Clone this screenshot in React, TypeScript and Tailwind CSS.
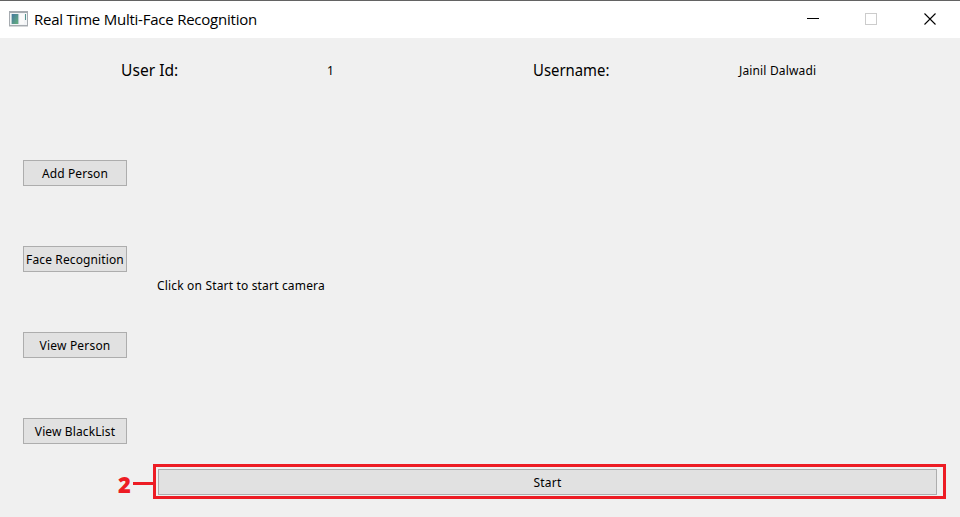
import type { ReactNode } from 'react';

const actions = [
  { label: 'Add Person', text: 'tracking-[0.1px]' },
  { label: 'Face Recognition', text: 'tracking-[0.12px]' },
  { label: 'View Person', text: 'tracking-[0.2px]' },
  { label: 'View BlackList', text: 'tracking-[0.12px]' },
];

function PushButton({ className, children }: { className: string; children: ReactNode }) {
  return (
    <button
      className={`flex h-[26px] items-center justify-center whitespace-nowrap border border-[#adadad] bg-[#e1e1e1] pt-px text-[12px] leading-4 ${className}`}
    >
      {children}
    </button>
  );
}

function TitleBar() {
  return (
    <header className="flex h-[38px] items-center border-t border-[#636363] bg-white pb-[2px] pl-[9px]">
      <svg width="19" height="16" viewBox="0 0 19 16" shapeRendering="crispEdges">
        <defs>
          <linearGradient id="pane" x1="0" y1="0" x2="1" y2="1">
            <stop offset="0" stopColor="#4478a0" />
            <stop offset="1" stopColor="#65b07c" />
          </linearGradient>
        </defs>
        <rect x="0" y="0" width="19" height="15" fill="#a6abb0" />
        <rect x="1" y="2" width="17" height="12" fill="#f2f4f6" />
        <rect x="2" y="3" width="8" height="10" fill="#b4ccd0" />
        <rect x="3" y="3" width="6" height="10" fill="url(#pane)" />
        <rect x="11" y="3" width="4" height="10" fill="#fafafa" />
        <rect x="16" y="3" width="1" height="6" fill="#559590" />
        <rect x="0" y="15" width="19" height="1" fill="#d5d7d9" />
      </svg>
      <h1 className="ml-[6px] whitespace-nowrap font-['Open_Sans',sans-serif] text-[15px] leading-5 tracking-[-0.23px]">
        Real Time Multi-Face Recognition
      </h1>
      <div className="ml-auto flex items-center">
        <svg width="153" height="14" viewBox="0 0 153 14" fill="none">
          <path d="M0 6.5h12" stroke="#000" />
          <rect x="58.5" y="1.5" width="11" height="11" stroke="#ccc" />
          <path d="M117.5 1.5l11 11M128.5 1.5l-11 11" stroke="#000" strokeWidth="1.1" />
        </svg>
      </div>
    </header>
  );
}

export default function App() {
  return (
    <div className="flex h-[517px] w-[960px] flex-col overflow-hidden bg-[#f0f0f0] font-['Noto_Sans',sans-serif] text-black">
      <TitleBar />
      <div className="grid h-[64px] grid-cols-[206px_206px_206px_1fr] items-center whitespace-nowrap pl-[121px] text-[12px] leading-4">
        <span className="origin-left scale-x-[0.975] text-[16px] leading-5">User Id:</span>
        <span className="pt-[2px]">1</span>
        <span className="origin-left scale-x-[0.93] text-[16px] leading-5">Username:</span>
        <span className="pt-[2px] tracking-[0.15px]">Jainil Dalwadi</span>
      </div>
      <main className="flex min-h-0 flex-1 pl-[23px]">
        <nav className="flex w-[104px] flex-col gap-[60px] pt-[58px]">
          {actions.map((a) => (
            <PushButton key={a.label} className="w-[104px] shrink-0">
              <span className={a.text}>{a.label}</span>
            </PushButton>
          ))}
        </nav>
        <section className="-ml-[10px] flex flex-1 flex-col">
          <p className="ml-[40px] mt-[176px] h-4 whitespace-nowrap text-[12px] leading-4 tracking-[0.17px]">
            Click on Start to start camera
          </p>
          <div className="mt-[170px] flex h-[35px] items-center">
            <span className="w-[16px] pl-px pt-[4px] font-['Open_Sans',sans-serif] text-[22px] font-extrabold leading-6 text-[#ed1c24]">
              2
            </span>
            <span className="mt-[4px] h-[3px] w-[20px] bg-[#ed1c24]" />
            <div className="h-[35px] w-[793px] border-[3px] border-[#ed1c24] pl-[2px] pt-[2px]">
              <PushButton className="w-[779px]">
                <span className="tracking-[0.2px]">Start</span>
              </PushButton>
            </div>
          </div>
        </section>
      </main>
    </div>
  );
}
